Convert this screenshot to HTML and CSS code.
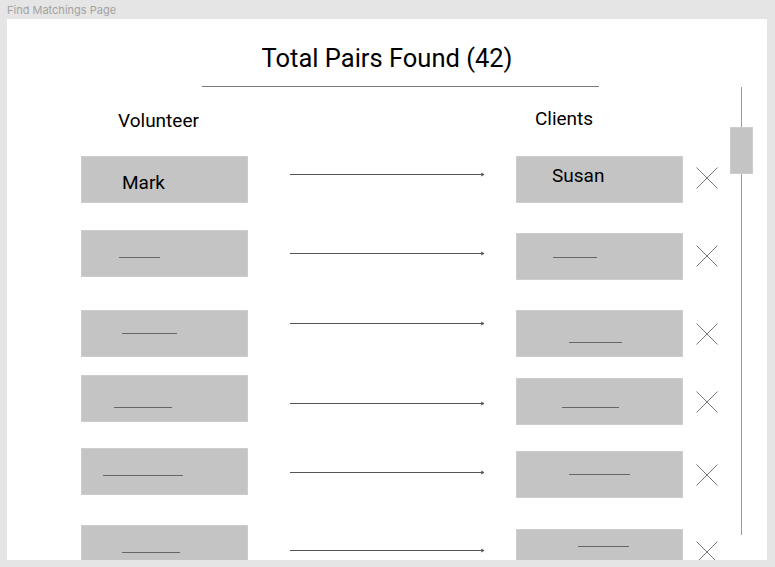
FILE: index.html
```html
<!DOCTYPE html>
<html>
<head>
<meta charset="utf-8">
<title>Find Matchings Page</title>
<link rel="stylesheet" href="styles.css">
</head>
<body>
<div class="frame-label">Find Matchings Page</div>
<main class="frame">
  <h1 class="title">Total Pairs Found (42)</h1>
  <hr class="title-rule">
  <div class="col-heads">
    <div class="head head-vol">Volunteer</div>
    <div class="head head-cli">Clients</div>
  </div>
  <div class="rows">
    <div class="row r1">
      <div class="box left"><span class="name">Mark</span></div>
      <svg class="arrow" width="194" height="5" viewBox="0 0 194 5"><line x1="0" y1="2.5" x2="193" y2="2.5"/><path d="M191 1 L194 2.5 L191 4"/></svg>
      <div class="box right"><span class="name">Susan</span></div>
      <svg class="remove" width="22" height="22" viewBox="0 0 22 22"><path d="M0.5 0.5 L21.5 21.5 M21.5 0.5 L0.5 21.5"/></svg>
    </div>
    <div class="row r2">
      <div class="box left"><span class="blank"></span></div>
      <svg class="arrow" width="194" height="5" viewBox="0 0 194 5"><line x1="0" y1="2.5" x2="193" y2="2.5"/><path d="M191 1 L194 2.5 L191 4"/></svg>
      <div class="box right"><span class="blank"></span></div>
      <svg class="remove" width="22" height="22" viewBox="0 0 22 22"><path d="M0.5 0.5 L21.5 21.5 M21.5 0.5 L0.5 21.5"/></svg>
    </div>
    <div class="row r3">
      <div class="box left"><span class="blank"></span></div>
      <svg class="arrow" width="194" height="5" viewBox="0 0 194 5"><line x1="0" y1="2.5" x2="193" y2="2.5"/><path d="M191 1 L194 2.5 L191 4"/></svg>
      <div class="box right"><span class="blank"></span></div>
      <svg class="remove" width="22" height="22" viewBox="0 0 22 22"><path d="M0.5 0.5 L21.5 21.5 M21.5 0.5 L0.5 21.5"/></svg>
    </div>
    <div class="row r4">
      <div class="box left"><span class="blank"></span></div>
      <svg class="arrow" width="194" height="5" viewBox="0 0 194 5"><line x1="0" y1="2.5" x2="193" y2="2.5"/><path d="M191 1 L194 2.5 L191 4"/></svg>
      <div class="box right"><span class="blank"></span></div>
      <svg class="remove" width="22" height="22" viewBox="0 0 22 22"><path d="M0.5 0.5 L21.5 21.5 M21.5 0.5 L0.5 21.5"/></svg>
    </div>
    <div class="row r5">
      <div class="box left"><span class="blank"></span></div>
      <svg class="arrow" width="194" height="5" viewBox="0 0 194 5"><line x1="0" y1="2.5" x2="193" y2="2.5"/><path d="M191 1 L194 2.5 L191 4"/></svg>
      <div class="box right"><span class="blank"></span></div>
      <svg class="remove" width="22" height="22" viewBox="0 0 22 22"><path d="M0.5 0.5 L21.5 21.5 M21.5 0.5 L0.5 21.5"/></svg>
    </div>
    <div class="row r6">
      <div class="box left"><span class="blank"></span></div>
      <svg class="arrow" width="194" height="5" viewBox="0 0 194 5"><line x1="0" y1="2.5" x2="193" y2="2.5"/><path d="M191 1 L194 2.5 L191 4"/></svg>
      <div class="box right"><span class="blank"></span></div>
      <svg class="remove" width="22" height="22" viewBox="0 0 22 22"><path d="M0.5 0.5 L21.5 21.5 M21.5 0.5 L0.5 21.5"/></svg>
    </div>
  </div>
  <div class="scrollbar"><div class="scroll-track"></div><div class="scroll-thumb"></div></div>
</main>
</body>
</html>
```

FILE: styles.css
```css
* { box-sizing: border-box; }
html, body { margin: 0; padding: 0; }
body {
  background: #e5e5e5;
  font-family: Roboto, "Liberation Sans", sans-serif;
  color: #000;
  width: 775px;
  height: 567px;
  overflow: hidden;
}
.frame-label {
  font-family: Inter, Roboto, sans-serif;
  font-size: 11px;
  line-height: 13px;
  color: #a3a3a3;
  padding: 4px 0 2px 7px;
  height: 19px;
}
.frame {
  position: relative;
  margin-left: 7px;
  width: 760px;
  height: 541px;
  background: #fff;
  overflow: hidden;
}
.title {
  margin: 0;
  padding-top: 25px;
  font-size: 25.5px;
  font-weight: 400;
  line-height: 28px;
  text-align: center;
}
.title-rule {
  margin: 14px 0 0 195px;
  width: 397px;
  border: 0;
  border-top: 1px solid #7a7a7a;
  height: 0;
}
.col-heads {
  display: flex;
  height: 32px;
  font-size: 19px;
  line-height: 22px;
}
.head-vol { margin: 23px 0 0 111px; }
.head-cli { margin: 21px 0 0 336px; }
.rows {
  padding-left: 74px;
  margin-top: 37px;
}
.row {
  display: flex;
  align-items: flex-start;
  height: 47px;
}
.row > * { flex: none; }
.row .arrow { margin-left: 42px; }
.row .right { margin-left: 32px; }
.row .remove { margin-left: 13px; }
.box {
  position: relative;
  width: 167px;
  height: 47px;
  background: #c4c4c4;
  box-shadow: inset 0 0 0 1px #cdcdcd;
}
.arrow line, .arrow path {
  stroke: #555;
  stroke-width: 1;
  fill: none;
}
.remove path {
  stroke: #555;
  stroke-width: 0.8;
  fill: none;
}
.name {
  position: absolute;
  font-size: 19px;
  line-height: 22px;
}
.left .name { left: 41px; top: 16px; }
.right .name { left: 36px; top: 9px; }
.blank {
  position: absolute;
  height: 0;
  border-top: 1px solid #666;
  left: var(--bx);
  top: var(--by);
  width: var(--bw);
}
.r2 { margin-top: 27px; }
.r3 { margin-top: 33px; }
.r4 { margin-top: 18px; }
.r5 { margin-top: 26px; }
.r6 { margin-top: 30px; }

.r1 .arrow { margin-top: 16px; }
.r2 .arrow { margin-top: 21px; }
.r3 .arrow { margin-top: 11px; }
.r4 .arrow { margin-top: 26px; }
.r5 .arrow { margin-top: 22px; }
.r6 .arrow { margin-top: 23px; }

.r2 .right { margin-top: 3px; }
.r4 .right { margin-top: 3px; }
.r5 .right { margin-top: 3px; }
.r6 .right { margin-top: 4px; }

.r1 .remove { margin-top: 11px; }
.r2 .remove { margin-top: 15px; }
.r3 .remove { margin-top: 13px; }
.r4 .remove { margin-top: 16px; }
.r5 .remove { margin-top: 16px; }
.r6 .remove { margin-top: 16px; }

.r2 .left .blank { --bx: 38px; --by: 27px; --bw: 41px; }
.r3 .left .blank { --bx: 41px; --by: 23px; --bw: 55px; }
.r4 .left .blank { --bx: 33px; --by: 32px; --bw: 58px; }
.r5 .left .blank { --bx: 22px; --by: 27px; --bw: 80px; }
.r6 .left .blank { --bx: 41px; --by: 27px; --bw: 58px; }

.r2 .right .blank { --bx: 37px; --by: 24px; --bw: 44px; }
.r3 .right .blank { --bx: 53px; --by: 32px; --bw: 53px; }
.r4 .right .blank { --bx: 46px; --by: 29px; --bw: 57px; }
.r5 .right .blank { --bx: 53px; --by: 23px; --bw: 61px; }
.r6 .right .blank { --bx: 62px; --by: 17px; --bw: 51px; }

.scrollbar {
  position: absolute;
  left: 723px;
  top: 68px;
  width: 23px;
  height: 448px;
}
.scroll-track {
  position: absolute;
  left: 11px;
  top: 0;
  width: 1px;
  height: 100%;
  background: #9a9a9a;
}
.scroll-thumb {
  position: absolute;
  left: 0;
  top: 40px;
  width: 23px;
  height: 47px;
  background: #c4c4c4;
  box-shadow: inset 0 0 0 1px #cdcdcd;
}
```
